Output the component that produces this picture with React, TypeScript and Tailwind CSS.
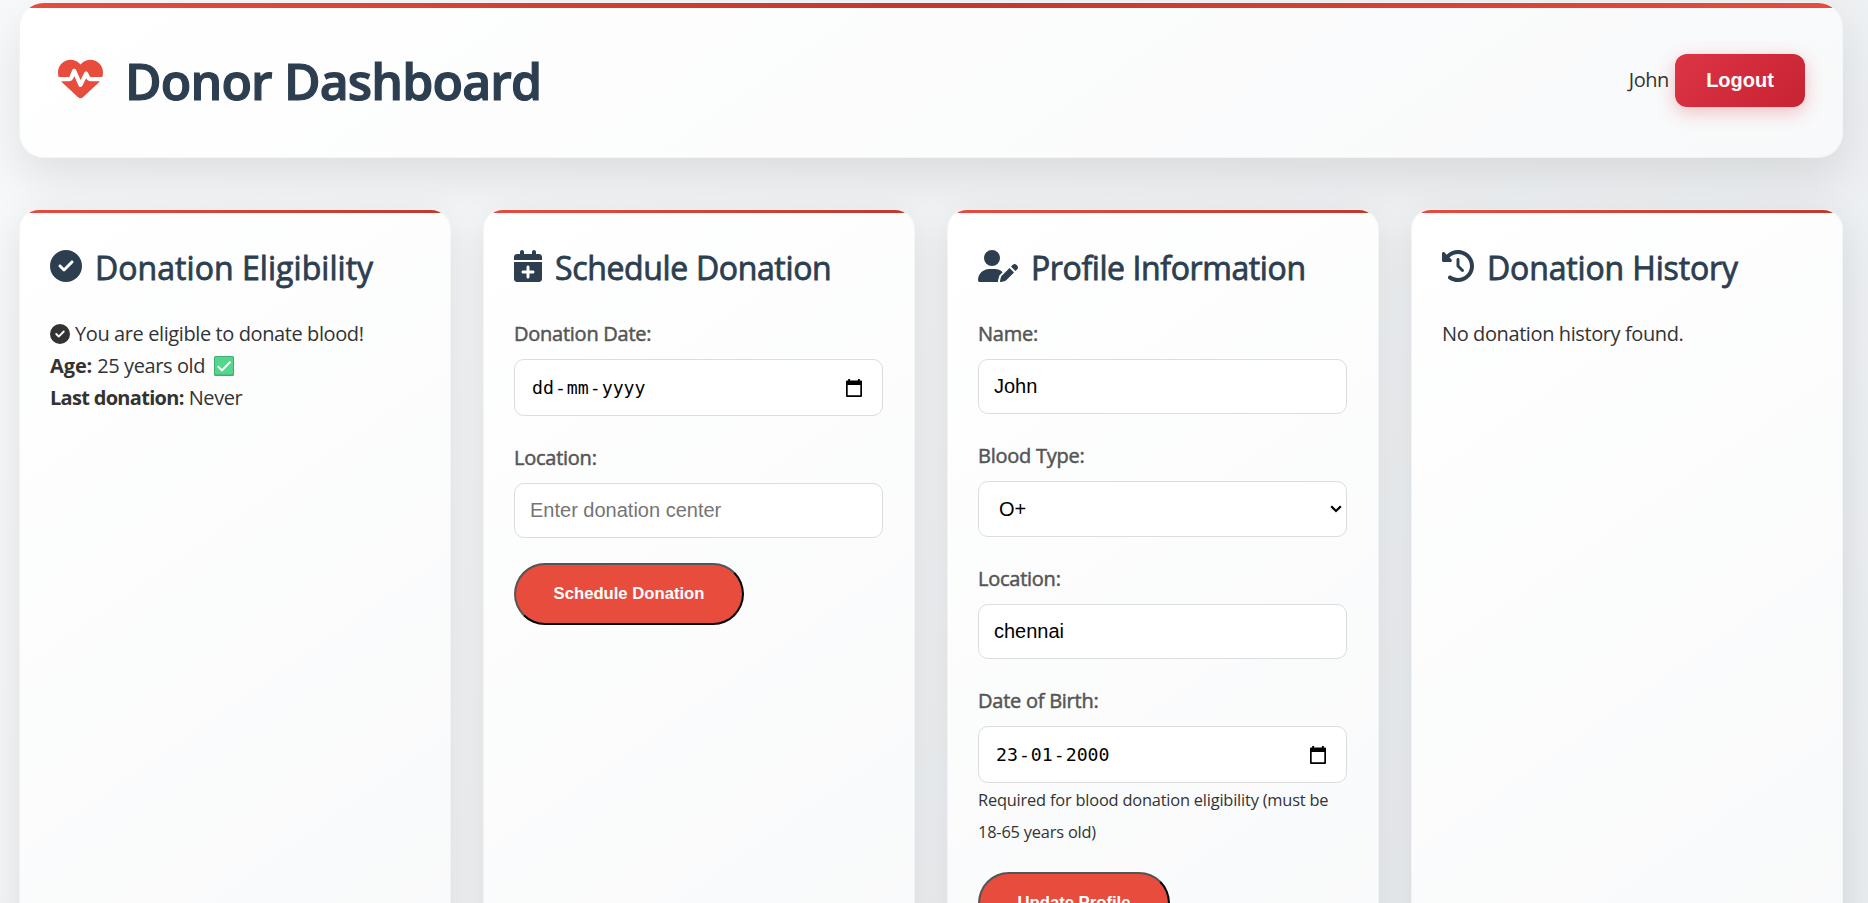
import type { ReactNode } from "react";
import { FaHeartPulse, FaCircleCheck, FaCalendarPlus, FaUserPen, FaClockRotateLeft } from "react-icons/fa6";

function Card({ icon, title, children }: { icon: ReactNode; title: ReactNode; children: ReactNode }) {
  return (
    <section className="relative h-[800px] overflow-hidden rounded-[20px] border border-[#e9ecef]/50 bg-linear-[145deg,#ffffff,#f8f9fa] pl-[30px] pr-[31px] pt-[32px] shadow-[0_10px_38px_rgba(0,0,0,0.1)]">
      <div className="absolute inset-x-0 top-0 h-[3px] bg-linear-to-r from-[#e74c3c] to-[#c0392b]" />
      <h2 className="mb-[25px] flex h-[51px] items-center gap-[13px] text-[32px] text-[#2c3e50] [-webkit-text-stroke:0.8px_#2c3e50]">
        <span className="-mt-[3px] shrink-0">{icon}</span>
        {title}
      </h2>
      {children}
    </section>
  );
}

const LABEL = "mb-[9px] block w-fit leading-8 tracking-[-0.25px] text-[#555] [-webkit-text-stroke:0.5px_#555]";
const BOX = "flex w-full items-center rounded-[10px] border border-[#ddd] bg-white font-['Liberation_Sans',sans-serif] text-[20px] tracking-normal text-black";
const BTN = "h-[62px] rounded-full border-2 border-black bg-[#e74c3c] [border-style:outset] font-['Liberation_Sans',sans-serif] text-[16.67px] font-bold tracking-normal text-white";

function DateBox({ parts }: { parts: string[] }) {
  return (
    <div className={BOX + " h-[57px] justify-between pl-[16px] pr-[20px]"}>
      <div className="flex font-['DejaVu_Sans_Mono',monospace] text-[18.2px]">
        <span className="px-px">{parts[0]}</span>
        <span>-</span>
        <span className="px-px">{parts[1]}</span>
        <span>-</span>
        <span className="px-px">{parts[2]}</span>
      </div>
      <svg width="16" height="18" viewBox="0 0 16 18">
        <path d="M2.2 0h1.9v1.6h7.8V0h1.9v1.6H15q1 0 1 1V17q0 1-1 1H1q-1 0-1-1V2.6q0-1 1-1h1.2zM1.7 6v10.3h12.6V6z" fillRule="evenodd" />
      </svg>
    </div>
  );
}

export default function App() {
  return (
    <div className="h-[903px] overflow-hidden bg-linear-[135deg,#f8f9fa,#e9ecef] pl-[19px] pr-[25px] pt-[2px] font-['Open_Sans',sans-serif] text-[20px] leading-8 tracking-[-0.4px] text-[#333]">
      <header className="relative mb-[51px] flex h-[156px] items-center justify-between overflow-hidden rounded-[25px] border border-[#e9ecef]/50 bg-linear-[145deg,#ffffff,#f8f9fa] pl-[38px] pr-[37px] shadow-[0_20px_50px_rgba(0,0,0,0.1)]">
        <div className="absolute inset-x-0 top-0 h-[5px] bg-linear-to-r from-[#e74c3c] via-[#c0392b] to-[#e74c3c]" />
        <h1 className="flex items-center gap-[22px] text-[50px] font-semibold tracking-[-0.85px] text-[#2c3e50] [-webkit-text-stroke:1.2px_#2c3e50]">
          <FaHeartPulse className="-mt-[3px] size-[45px] text-[#e74c3c]" strokeWidth={0} />
          <span className="pt-[2px]">Donor Dashboard</span>
        </h1>
        <div className="flex items-center gap-[6px]">
          <span>John</span>
          <button className="h-[53px] w-[130px] rounded-[12px] bg-linear-[135deg,#dc3545,#c82333] font-['Liberation_Sans',sans-serif] text-[20px] font-bold tracking-normal text-white shadow-[0_5px_18px_rgba(220,53,69,0.3)]">Logout</button>
        </div>
      </header>
      <main className="grid grid-cols-4 gap-8">
        <Card icon={<FaCircleCheck className="size-8" />} title={<span className="tracking-[0.05px]">Donation Eligibility</span>}>
          <p className="flex items-center gap-[5px]"><FaCircleCheck className="-mt-px size-5" /><span>You are eligible to donate blood!</span></p>
          <p className="flex items-center">
            <strong className="mr-[5px] tracking-[-0.1px]">Age:</strong>
            <span className="mr-[9px]">25 years old</span>
            <svg width="20" height="20" viewBox="0 0 20 20">
              <rect width="20" height="20" rx="1.5" fill="#3fae73" />
              <rect x="1" y="1" width="18" height="17.5" rx="1" fill="#55d68d" />
              <path d="M3.8 10.2l4.2 4.2 8.4-8.6" fill="none" stroke="#fff" strokeWidth="2" />
            </svg>
          </p>
          <p className="flex"><strong className="mr-[5px] tracking-[-0.7px]">Last donation:</strong><span>Never</span></p>
        </Card>
        <Card icon={<FaCalendarPlus className="h-8 w-7" />} title={<span className="tracking-[-0.35px]">Schedule Donation</span>}>
          <label className={LABEL}>Donation Date:</label>
          <DateBox parts={["dd", "mm", "yyyy"]} />
          <label className={LABEL + " mt-[26px]"}>Location:</label>
          <input placeholder="Enter donation center" className={BOX + " h-[55px] px-[15px] placeholder:text-[#757575]"} />
          <button className={BTN + " mt-[25px] w-[230px]"}>Schedule Donation</button>
        </Card>
        <Card icon={<FaUserPen className="h-8 w-10" />} title={<span className="tracking-[-0.4px]">Profile Information</span>}>
          <label className={LABEL}>Name:</label>
          <input defaultValue="John" className={BOX + " h-[55px] px-[15px]"} />
          <label className={LABEL + " mt-[26px]"}>Blood Type:</label>
          <div className={BOX + " h-[56px] justify-between pl-[20px] pr-[4px]"}>
            <span>O+</span>
            <svg width="12" height="8" viewBox="0 0 12 8"><path d="M1.2 1.2L6 6l4.8-4.8" fill="none" stroke="#000" strokeWidth="2.2" /></svg>
          </div>
          <label className={LABEL + " mt-[26px]"}>Location:</label>
          <input defaultValue="chennai" className={BOX + " h-[55px] px-[15px]"} />
          <label className={LABEL + " mt-[26px]"}>Date of Birth:</label>
          <DateBox parts={["23", "01", "2000"]} />
          <small className="mt-px block text-[16.4px] leading-8 tracking-[-0.2px]">Required for blood donation eligibility (must be<br />18-65 years old)</small>
          <button className={BTN + " mt-6 w-[192px]"}>Update Profile</button>
        </Card>
        <Card icon={<FaClockRotateLeft className="size-8" />} title={<span className="tracking-[-0.15px]">Donation History</span>}>
          <p>No donation history found.</p>
        </Card>
      </main>
    </div>
  );
}
